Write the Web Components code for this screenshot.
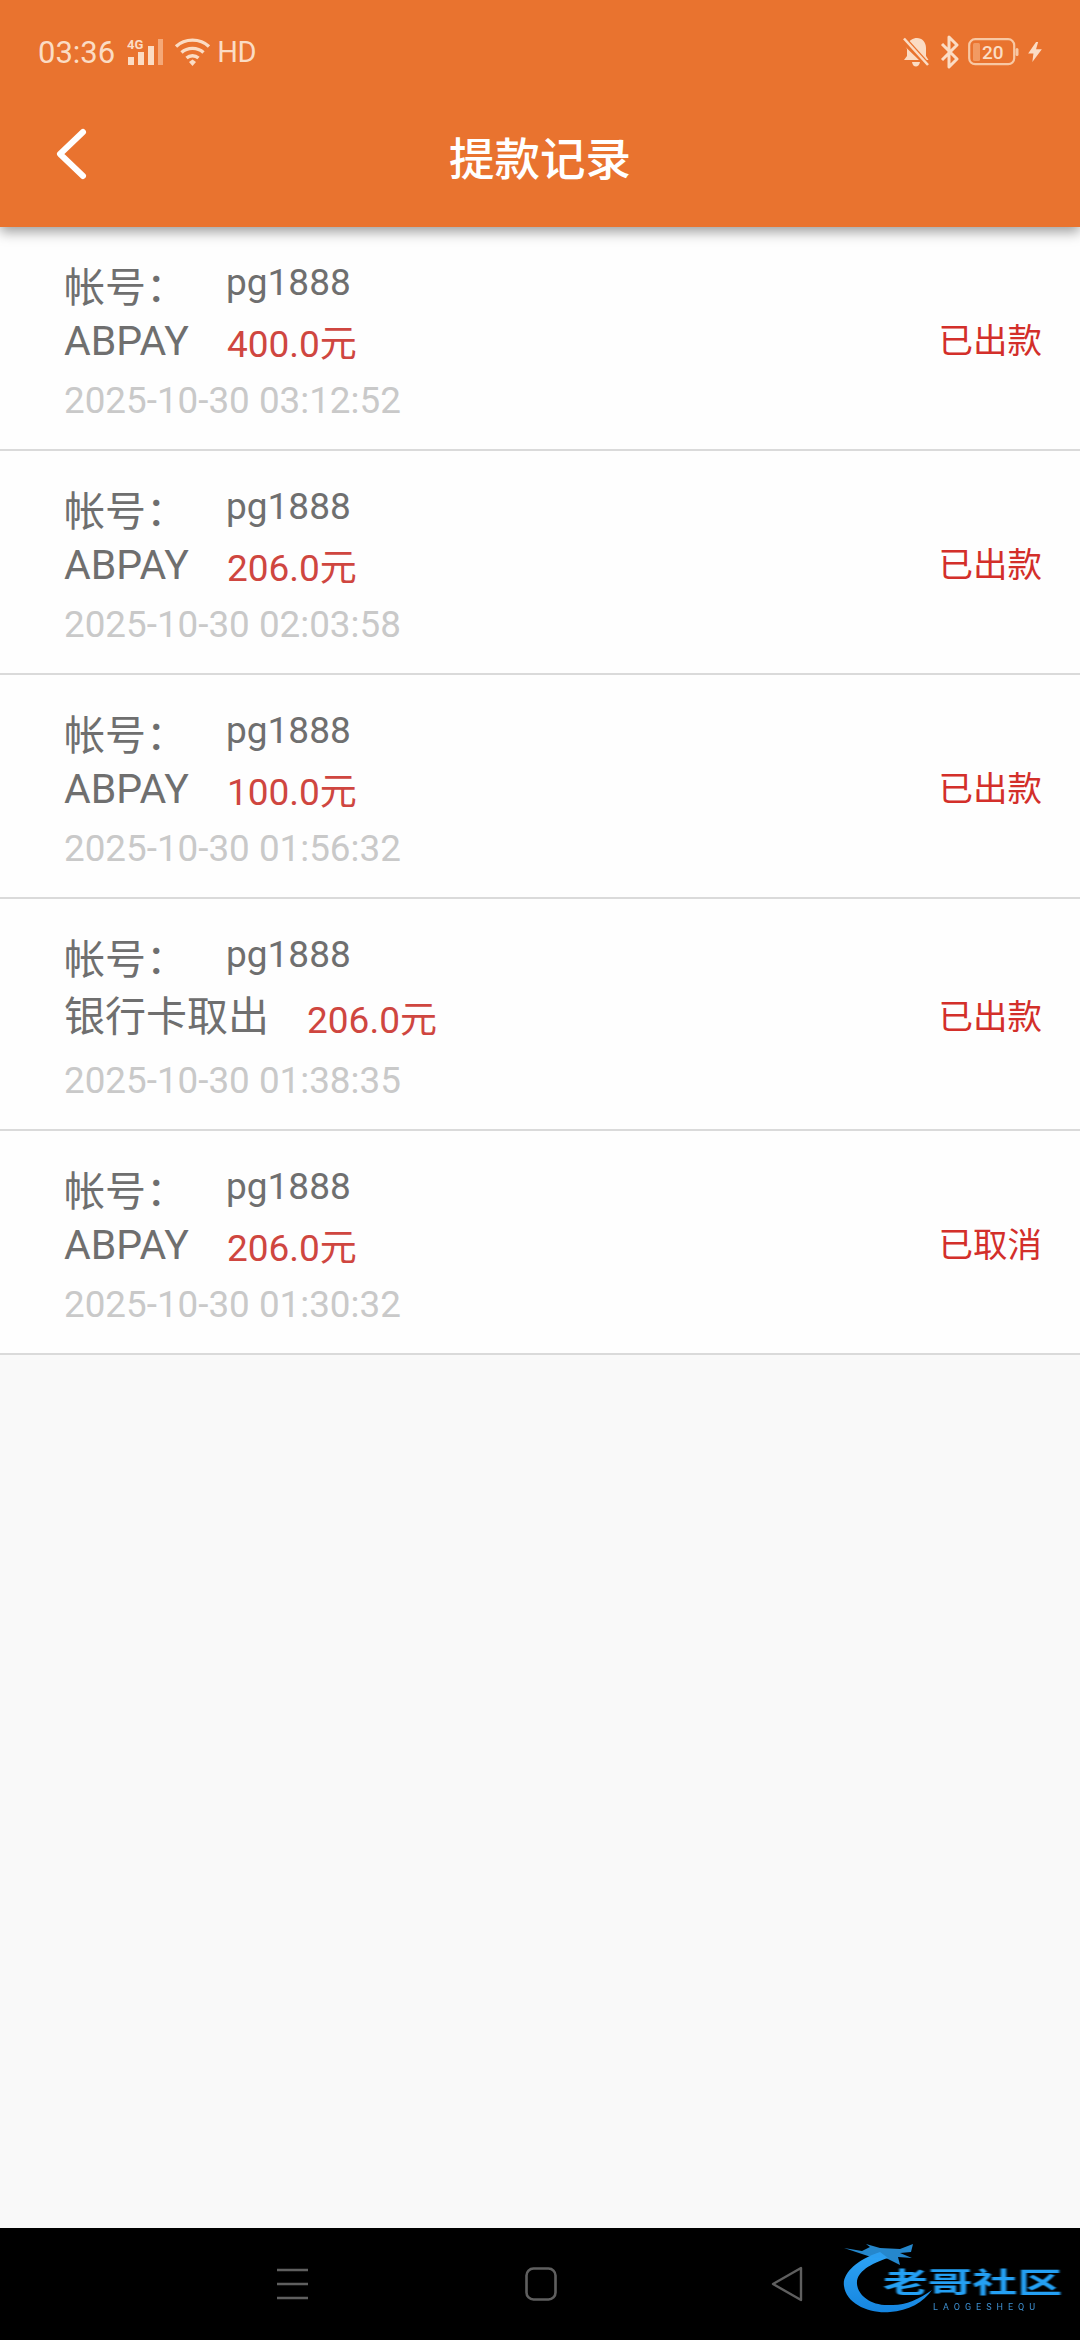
<!DOCTYPE html>
<html>
<head>
<meta charset="utf-8">
<style>
    html, body { margin: 0; padding: 0; }
    body {
        width: 1080px;
        height: 2340px;
        background: #f9f9f9;
        display: flex;
        flex-direction: column;
        font-family: Roboto, "Noto Sans CJK SC", sans-serif;
    }
    record-list { flex: 1; }
</style>
</head>
<body>
<app-header title="提款记录"></app-header>
<record-list>
    <record-row><span slot="method">ABPAY</span><span slot="amount">400.0元</span><span slot="time">2025-10-30 03:12:52</span><span slot="status">已出款</span></record-row>
    <record-row><span slot="method">ABPAY</span><span slot="amount">206.0元</span><span slot="time">2025-10-30 02:03:58</span><span slot="status">已出款</span></record-row>
    <record-row><span slot="method">ABPAY</span><span slot="amount">100.0元</span><span slot="time">2025-10-30 01:56:32</span><span slot="status">已出款</span></record-row>
    <record-row><span slot="method" class="cjk">银行卡取出</span><span slot="amount">206.0元</span><span slot="time">2025-10-30 01:38:35</span><span slot="status">已出款</span></record-row>
    <record-row><span slot="method">ABPAY</span><span slot="amount">206.0元</span><span slot="time">2025-10-30 01:30:32</span><span slot="status">已取消</span></record-row>
</record-list>
<nav-bar></nav-bar>

<script>
class StatusBar extends HTMLElement {
    connectedCallback() {
        this.attachShadow({ mode: 'open' });
        this.shadowRoot.innerHTML = `
            <style>
                :host {
                    display: flex;
                    align-items: center;
                    height: 104px;
                    padding: 0 37px 0 38px;
                    color: #fbdcc4;
                    font-family: Roboto, sans-serif;
                    font-size: 31px;
                }
                svg { display: block; flex: none; }
                .spacer { flex: 1; }
                .time { margin-right: 12px; }
                .wifi { margin: 0 6px 0 10px; }
                .hd { font-size: 29px; letter-spacing: -0.5px; }
                .bell { margin-right: 11px; }
                .bt { margin-right: 8px; }
                .charge { margin-left: 8px; }
            </style>
            <span class="time">03:36</span>
            <svg width="37" height="28" viewBox="0 0 37 28">
                <text x="0" y="11" font-family="Roboto, sans-serif" font-size="13" font-weight="700" fill="#fbdcc4">4G</text>
                <rect x="1" y="19" width="6" height="8" fill="#fbdcc4"/>
                <rect x="11" y="14" width="6" height="13" fill="#fbdcc4"/>
                <rect x="21" y="8" width="6" height="19" fill="#fbdcc4"/>
                <rect x="31" y="1" width="5" height="26" fill="#f5a878"/>
            </svg>
            <svg class="wifi" width="37" height="30" viewBox="0 0 36 30">
                <g fill="none" stroke="#fbdcc4" stroke-width="3.4">
                    <path d="M1.5 9.5 C10.5 1 25.5 1 34.5 9.5"/>
                    <path d="M7 15.5 C13 10 23 10 29 15.5"/>
                    <path d="M12 21 C15.5 18 20.5 18 24 21"/>
                </g>
                <path d="M14.5 25 L18 22.5 L21.5 25 L18 29 Z" fill="#fbdcc4"/>
            </svg>
            <span class="hd">HD</span>
            <span class="spacer"></span>
            <svg class="bell" width="26" height="30" viewBox="0 0 26 30">
                <path d="M5 8 C6 3 10 1 14 1 C19 1 23 5 23 11 V19 L25.5 23 H20 Z M2.5 10 L16 23 H1 L4 19 V12 Z M9 25 H17 C16.5 28 14.5 29.5 13 29.5 C11 29.5 9.5 28 9 25 Z" fill="#fbdcc4"/>
                <path d="M1 1.5 L25 28" stroke="#e9732f" stroke-width="5"/>
                <path d="M1 1.5 L25 28" stroke="#fbdcc4" stroke-width="2.6"/>
            </svg>
            <svg class="bt" width="20" height="34" viewBox="0 0 20 34">
                <path d="M2 9 L17 24 L9 32 V2 L17 10 L2 25" fill="none" stroke="#fbdcc4" stroke-width="3" stroke-linejoin="round"/>
            </svg>
            <svg width="51" height="28" viewBox="0 0 51 28">
                <rect x="1.2" y="1.2" width="45" height="25" rx="6" fill="none" stroke="#f8c8a4" stroke-width="2.2"/>
                <rect x="5" y="5" width="7" height="18" rx="1.5" fill="#f29a62"/>
                <rect x="47.5" y="10" width="3" height="8" rx="1.5" fill="#f8c8a4"/>
                <text x="14" y="21" font-family="Roboto, sans-serif" font-size="19" font-weight="500" fill="#fbdcc4">20</text>
            </svg>
            <svg class="charge" width="16" height="20" viewBox="0 0 14 19">
                <path d="M8 0 L0.5 11 H5.5 L4.5 19 L13.5 7 H8 L10 0 Z" fill="#fbdcc4"/>
            </svg>
        `;
    }
}
customElements.define('status-bar', StatusBar);

class AppHeader extends HTMLElement {
    connectedCallback() {
        this.attachShadow({ mode: 'open' });
        this.shadowRoot.innerHTML = `
            <style>
                :host {
                    display: block;
                    position: relative;
                    z-index: 2;
                    height: 227px;
                    background: #e9732f;
                    box-shadow: 0 5px 12px rgba(0, 0, 0, 0.38);
                }
                .bar {
                    display: flex;
                    align-items: center;
                    justify-content: center;
                    position: relative;
                    height: 108px;
                    margin-top: -2px;
                    color: #fff;
                    font-family: "Noto Sans CJK SC", sans-serif;
                    font-size: 45.5px;
                    font-weight: 500;
                }
                .back { position: absolute; left: 54px; top: 25px; display: block; }
            </style>
            <status-bar></status-bar>
            <div class="bar">
                <svg class="back" width="34" height="54" viewBox="0 0 34 54">
                    <path d="M29 5 L6 27 L29 49" fill="none" stroke="#fff" stroke-width="6" stroke-linecap="round" stroke-linejoin="round"/>
                </svg>
                <span>${this.getAttribute('title')}</span>
            </div>
        `;
    }
}
customElements.define('app-header', AppHeader);

class RecordList extends HTMLElement {
    connectedCallback() {
        this.attachShadow({ mode: 'open' });
        this.shadowRoot.innerHTML = `
            <style>
                :host { display: block; }
            </style>
            <slot></slot>
        `;
    }
}
customElements.define('record-list', RecordList);

class RecordRow extends HTMLElement {
    connectedCallback() {
        this.attachShadow({ mode: 'open' });
        this.shadowRoot.innerHTML = `
            <style>
                :host {
                    display: flex;
                    align-items: center;
                    justify-content: space-between;
                    background: #fefefe;
                    border-bottom: 2px solid #dadada;
                    padding: 27px 38px 27px 64px;
                    font-family: Roboto, "Noto Sans CJK SC", sans-serif;
                }
                .account { display: flex; align-items: center; color: #6f6f6f; font-size: 41px; }
                .label { width: 162px; }
                .name { font-size: 37px; position: relative; top: -2px; }
                .pay { display: flex; align-items: center; color: #6f6f6f; font-size: 41px; }
                ::slotted(.cjk) { line-height: 62px; }
                .amount { margin-left: 38px; color: #cf4640; font-size: 37px; }
                .time { margin-top: 11px; color: #c9c9c9; font-size: 36.8px; }
                .status { color: #d32f2a; font-size: 34.5px; }
            </style>
            <div>
                <div class="account"><span class="label">帐号：</span><span class="name">pg1888</span></div>
                <div class="pay"><slot name="method"></slot><span class="amount"><slot name="amount"></slot></span></div>
                <div class="time"><slot name="time"></slot></div>
            </div>
            <div class="status"><slot name="status"></slot></div>
        `;
    }
}
customElements.define('record-row', RecordRow);

class LogoMark extends HTMLElement {
    connectedCallback() {
        this.attachShadow({ mode: 'open' });
        this.shadowRoot.innerHTML = `
            <style>
                :host {
                    display: block;
                    position: absolute;
                    left: 840px;
                    top: 12px;
                    width: 230px;
                    height: 80px;
                }
                svg { position: absolute; left: 0; top: 0; filter: blur(0.7px); }
                .cn {
                    position: absolute;
                    left: 43px;
                    top: 26px;
                    height: 30px;
                    white-space: nowrap;
                    font-family: "Noto Sans CJK SC", sans-serif;
                    font-size: 28px;
                    line-height: 30px;
                    font-weight: 700;
                    color: #24a0f4;
                    transform: scaleX(1.6);
                    transform-origin: left center;
                    filter: blur(0.5px);
                }
                .en {
                    position: absolute;
                    left: 93px;
                    top: 62px;
                    white-space: nowrap;
                    font-family: Roboto, sans-serif;
                    font-size: 9px;
                    line-height: 10px;
                    letter-spacing: 5px;
                    color: #3d8fd0;
                    filter: blur(0.3px);
                }
            </style>
            <svg width="230" height="80" viewBox="0 0 230 80">
                <defs>
                    <linearGradient id="sw" x1="0" y1="0" x2="0" y2="1">
                        <stop offset="0" stop-color="#2ea4f5"/>
                        <stop offset="1" stop-color="#1585e0"/>
                    </linearGradient>
                </defs>
                <path d="M40 12 C16 20 2 34 4 46 C6 64 30 74 50 72 C68 71 84 62 92 50 C78 60 64 66 50 65 C32 66 18 56 17 44 C16 32 30 24 48 18 Z" fill="url(#sw)"/>
                <path d="M4 8 L22 11 L30 7 L26 4 L40 8 L60 9 L73 4 L71 12 L60 13 L72 18 L58 17 L60 25 L46 18 L34 18 Z" fill="#2b9ff0" opacity="0.85"/>
            </svg>
            <span class="cn">老哥社区</span>
            <span class="en">LAOGESHEQU</span>
        `;
    }
}
customElements.define('logo-mark', LogoMark);

class NavBar extends HTMLElement {
    connectedCallback() {
        this.attachShadow({ mode: 'open' });
        this.shadowRoot.innerHTML = `
            <style>
                :host {
                    display: flex;
                    align-items: center;
                    position: relative;
                    height: 112px;
                    background: #000;
                    padding-left: 276px;
                    box-sizing: border-box;
                }
                svg { display: block; flex: none; }
                .home { margin-left: 216px; }
                .back { margin-left: 214px; }
            </style>
            <svg width="33" height="34" viewBox="0 0 33 34">
                <path d="M1 3 H32 M1 17 H32 M1 31 H32" stroke="#5f5f5f" stroke-width="2.4"/>
            </svg>
            <svg class="home" width="32" height="34" viewBox="0 0 32 34">
                <rect x="1.5" y="1.5" width="29" height="31" rx="7" fill="none" stroke="#5f5f5f" stroke-width="2.6"/>
            </svg>
            <svg class="back" width="32" height="36" viewBox="0 0 32 36">
                <path d="M30 2 V34 L2 18 Z" fill="none" stroke="#5f5f5f" stroke-width="2.4" stroke-linejoin="round"/>
            </svg>
            <logo-mark></logo-mark>
        `;
    }
}
customElements.define('nav-bar', NavBar);
</script>
</body>
</html>
